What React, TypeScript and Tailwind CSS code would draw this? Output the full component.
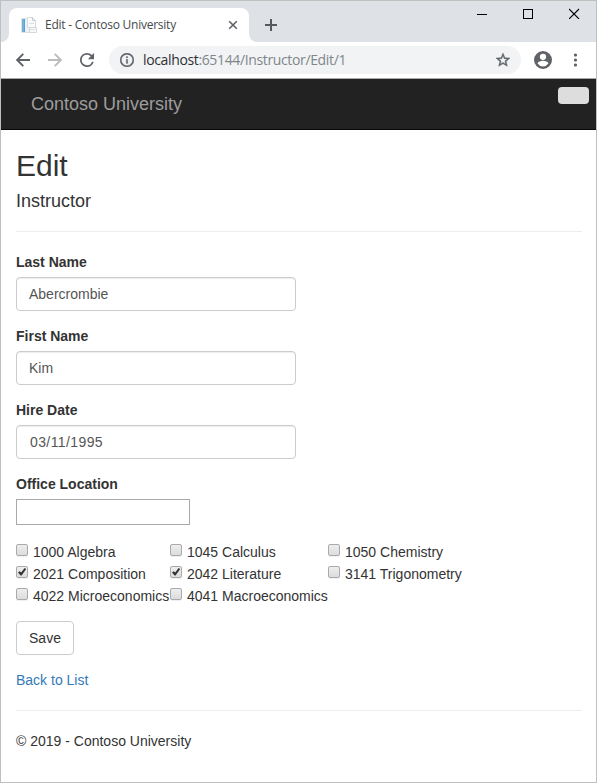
import React from "react";

type Course = { id: number; title: string; checked?: boolean };

const courses: Course[][] = [
  [{ id: 1000, title: "Algebra" }, { id: 1045, title: "Calculus" }, { id: 1050, title: "Chemistry" }],
  [
    { id: 2021, title: "Composition", checked: true },
    { id: 2042, title: "Literature", checked: true },
    { id: 3141, title: "Trigonometry" },
  ],
  [{ id: 4022, title: "Microeconomics" }, { id: 4041, title: "Macroeconomics" }],
];

function TabStrip() {
  return (
    <div className="relative flex h-[41px] bg-[#dee1e6] pl-2 pt-[7px]">
      <svg className="absolute bottom-0 left-0" width="8" height="8">
        <path d="M0 8A8 8 0 0 0 8 0V8Z" fill="#fff" />
      </svg>
      <div className="flex h-[34px] w-[240px] items-center rounded-t-lg bg-white pl-3 pr-[11px]">
        <svg width="16" height="16" viewBox="0 0 16 16">
          <path d="M.5 1.5h10l2 2v12H.5z" fill="#edf1f5" stroke="#dde2e7" />
          <rect x="1" y="2" width="3" height="13" fill="#5aa2d2" />
          <path d="M2 2v13" stroke="#8dc1e2" />
          <path d="M6.5.5h5l3 3v7h-8z" fill="#fbfbfc" stroke="#d8dce0" />
          <path d="M11.5.5v3h3" fill="none" stroke="#c5cbd2" />
          <path d="M8.5 10.5h7v5h-7z" fill="#f7f8f9" stroke="#d3d8dd" />
          <path d="M8 6.5h5M9 12.5h5" stroke="#dce0e5" />
        </svg>
        <span className="ml-2 w-[150px] whitespace-nowrap font-['Open_Sans',sans-serif] text-xs leading-4 tracking-[-0.24px] text-[#45494d]">
          Edit - Contoso University
        </span>
        <svg className="ml-auto" width="10" height="10" viewBox="0 0 10 10">
          <path d="M1.2 1.2l7.6 7.6M8.8 1.2L1.2 8.8" stroke="#5f6368" strokeWidth="1.6" />
        </svg>
      </div>
      <svg className="self-end" width="8" height="8">
        <path d="M8 8A8 8 0 0 1 0 0V8Z" fill="#fff" />
      </svg>
      <svg className="ml-2 mt-[11px]" width="12" height="12" viewBox="0 0 12 12">
        <path d="M6 0v12M0 6h12" stroke="#55595e" strokeWidth="2" />
      </svg>
      <div className="ml-auto mr-4 flex items-start gap-9">
        <svg width="10" height="11" shapeRendering="crispEdges">
          <path d="M0 6.5h10" stroke="#000" />
        </svg>
        <svg width="10" height="11" viewBox="0 0 10 11" shapeRendering="crispEdges">
          <path d="M.5 1.5h9v9h-9z" fill="none" stroke="#000" />
        </svg>
        <svg width="11" height="11" viewBox="0 0 11 11">
          <path d="M0 1l10 10M10 1L0 11" stroke="#000" strokeWidth="1.1" />
        </svg>
      </div>
    </div>
  );
}

function Toolbar() {
  return (
    <div className="flex h-[37px] items-center border-b border-[#a9a9a9] bg-white pl-[15px] text-[#5f6368]">
      <svg width="14" height="14" viewBox="0 0 14 14" fill="none" stroke="currentColor" strokeWidth="1.9">
        <path d="M14 7H1.5M7.3.9L1.2 7l6.1 6.1" />
      </svg>
      <svg className="ml-[18px]" width="14" height="14" viewBox="0 0 14 14" fill="none" stroke="#babcbe" strokeWidth="1.9">
        <path d="M0 7h12.5M6.7.9L12.8 7l-6.1 6.1" />
      </svg>
      <svg className="ml-[18px]" width="14" height="14" viewBox="4 4 16 16" fill="currentColor">
        <path d="M17.65 6.35A7.96 7.96 0 0 0 12 4a8 8 0 1 0 7.73 10h-2.08A6 6 0 1 1 12 6c1.66 0 3.14.69 4.22 1.78L13 11h7V4z" />
      </svg>
      <div className="ml-[15px] flex h-7 w-[412px] items-center rounded-full bg-[#f1f3f4] pl-[11px] pr-[11px]">
        <svg width="14" height="14" viewBox="2 2 20 20" fill="currentColor" stroke="currentColor" strokeWidth="0.4">
          <path d="M11 7h2v2h-2zm0 4h2v6h-2zm1-9a10 10 0 1 0 0 20 10 10 0 0 0 0-20m0 18a8 8 0 1 1 0-16 8 8 0 0 1 0 16" />
        </svg>
        <span className="ml-[9px] w-[210px] whitespace-nowrap font-['Open_Sans',sans-serif] text-sm leading-5 tracking-[-0.36px] text-[#80868b]">
          <span className="text-[#2d3034]">localhost</span>:65144/Instructor/Edit/1
        </span>
        <svg className="ml-auto" width="14" height="14" viewBox="2 2 20 20" fill="currentColor" stroke="currentColor" strokeWidth="0.6">
          <path d="M22 9.24l-7.19-.62L12 2 9.19 8.63 2 9.24l5.46 4.73L5.82 21 12 17.27 18.18 21l-1.63-7.03zM12 15.4l-3.76 2.27 1-4.28-3.32-2.88 4.38-.38L12 6.1l1.71 4.04 4.38.38-3.32 2.88 1 4.28z" />
        </svg>
      </div>
      <svg className="ml-[13px]" width="18" height="18" viewBox="2 2 20 20" fill="currentColor">
        <path d="M12 2a10 10 0 1 0 0 20 10 10 0 0 0 0-20m0 3a3.5 3.5 0 1 1 0 7 3.5 3.5 0 0 1 0-7m0 14.2a7.2 7.2 0 0 1-6-3.22c.03-1.99 4-3.08 6-3.08s5.97 1.09 6 3.08a7.2 7.2 0 0 1-6 3.22" />
      </svg>
      <svg className="ml-[22px]" width="4" height="14" viewBox="0 0 4 14" fill="currentColor">
        <circle cx="1.5" cy="2" r="1.6" />
        <circle cx="1.5" cy="7" r="1.6" />
        <circle cx="1.5" cy="12" r="1.6" />
      </svg>
    </div>
  );
}

function Field({ label, value, date }: { label: string; value: string; date?: boolean }) {
  return (
    <div className="mb-[15px]">
      <div className="mb-[5px] font-bold">{label}</div>
      <div
        className={`flex h-[34px] w-[280px] items-center rounded border border-[#ccc] text-[#555] shadow-[inset_0_1px_1px_rgba(0,0,0,0.075)] ${
          date ? "pl-[13px] tracking-[0.4px]" : "pl-3"
        }`}
      >
        {value}
      </div>
    </div>
  );
}

function Checkbox({ checked }: { checked?: boolean }) {
  return (
    <span className="mr-[5px] mt-[3px] h-3 w-3 shrink-0 rounded-[2px] border border-[#aaa] bg-linear-to-b from-[#eee] to-[#dcdcdc] shadow-[0_1px_0_rgba(0,0,0,0.06)]">
      {checked && (
        <svg className="block" width="10" height="10" viewBox="0 0 10 10">
          <path d="M1 5.6L2.8 4.2 4.2 5.6 7.6 1 9.2 2.1 4.6 8.6H3.6Z" fill="#333" />
        </svg>
      )}
    </span>
  );
}

export default function App() {
  return (
    <div className="flex h-[783px] w-[597px] flex-col border border-[#bfbfbf] bg-white font-['Liberation_Sans',Arial,sans-serif] text-sm leading-5 text-[#333]">
      <TabStrip />
      <Toolbar />
      <nav className="flex h-[51px] justify-between border-b border-[#080808] bg-[#222] pl-[30px] pr-[7px]">
        <span className="pt-[15px] text-lg leading-5 text-[#9d9d9d]">Contoso University</span>
        <span className="mt-2 h-[17px] w-[31px] rounded bg-[#ddd]" />
      </nav>
      <main className="pl-[15px] pr-[14px] pt-[19px]">
        <h2 className="text-[30px] leading-[33px]">Edit</h2>
        <h4 className="mt-[9px] text-lg leading-5">Instructor</h4>
        <hr className="my-5 border-[#eee]" />
        <Field label="Last Name" value="Abercrombie" />
        <Field label="First Name" value="Kim" />
        <Field label="Hire Date" value="03/11/1995" date />
        <div className="mb-[5px] font-bold">Office Location</div>
        <div className="h-[26px] w-[174px] border border-[#a9a9a9]" />
        <div className="mt-4 grid grid-cols-[154px_158px_auto]">
          {courses.flat().map((c) => (
            <div key={c.id} className="flex h-[22px] items-start whitespace-nowrap">
              <Checkbox checked={c.checked} />
              <span className="pt-px">
                {c.id} {c.title}
              </span>
            </div>
          ))}
        </div>
        <button className="mt-[14px] block h-[34px] w-[58px] rounded border border-[#ccc] bg-white">Save</button>
        <a className="mt-[15px] block text-[#337ab7]">Back to List</a>
        <hr className="my-5 border-[#eee]" />
        <footer>© 2019 - Contoso University</footer>
      </main>
    </div>
  );
}
